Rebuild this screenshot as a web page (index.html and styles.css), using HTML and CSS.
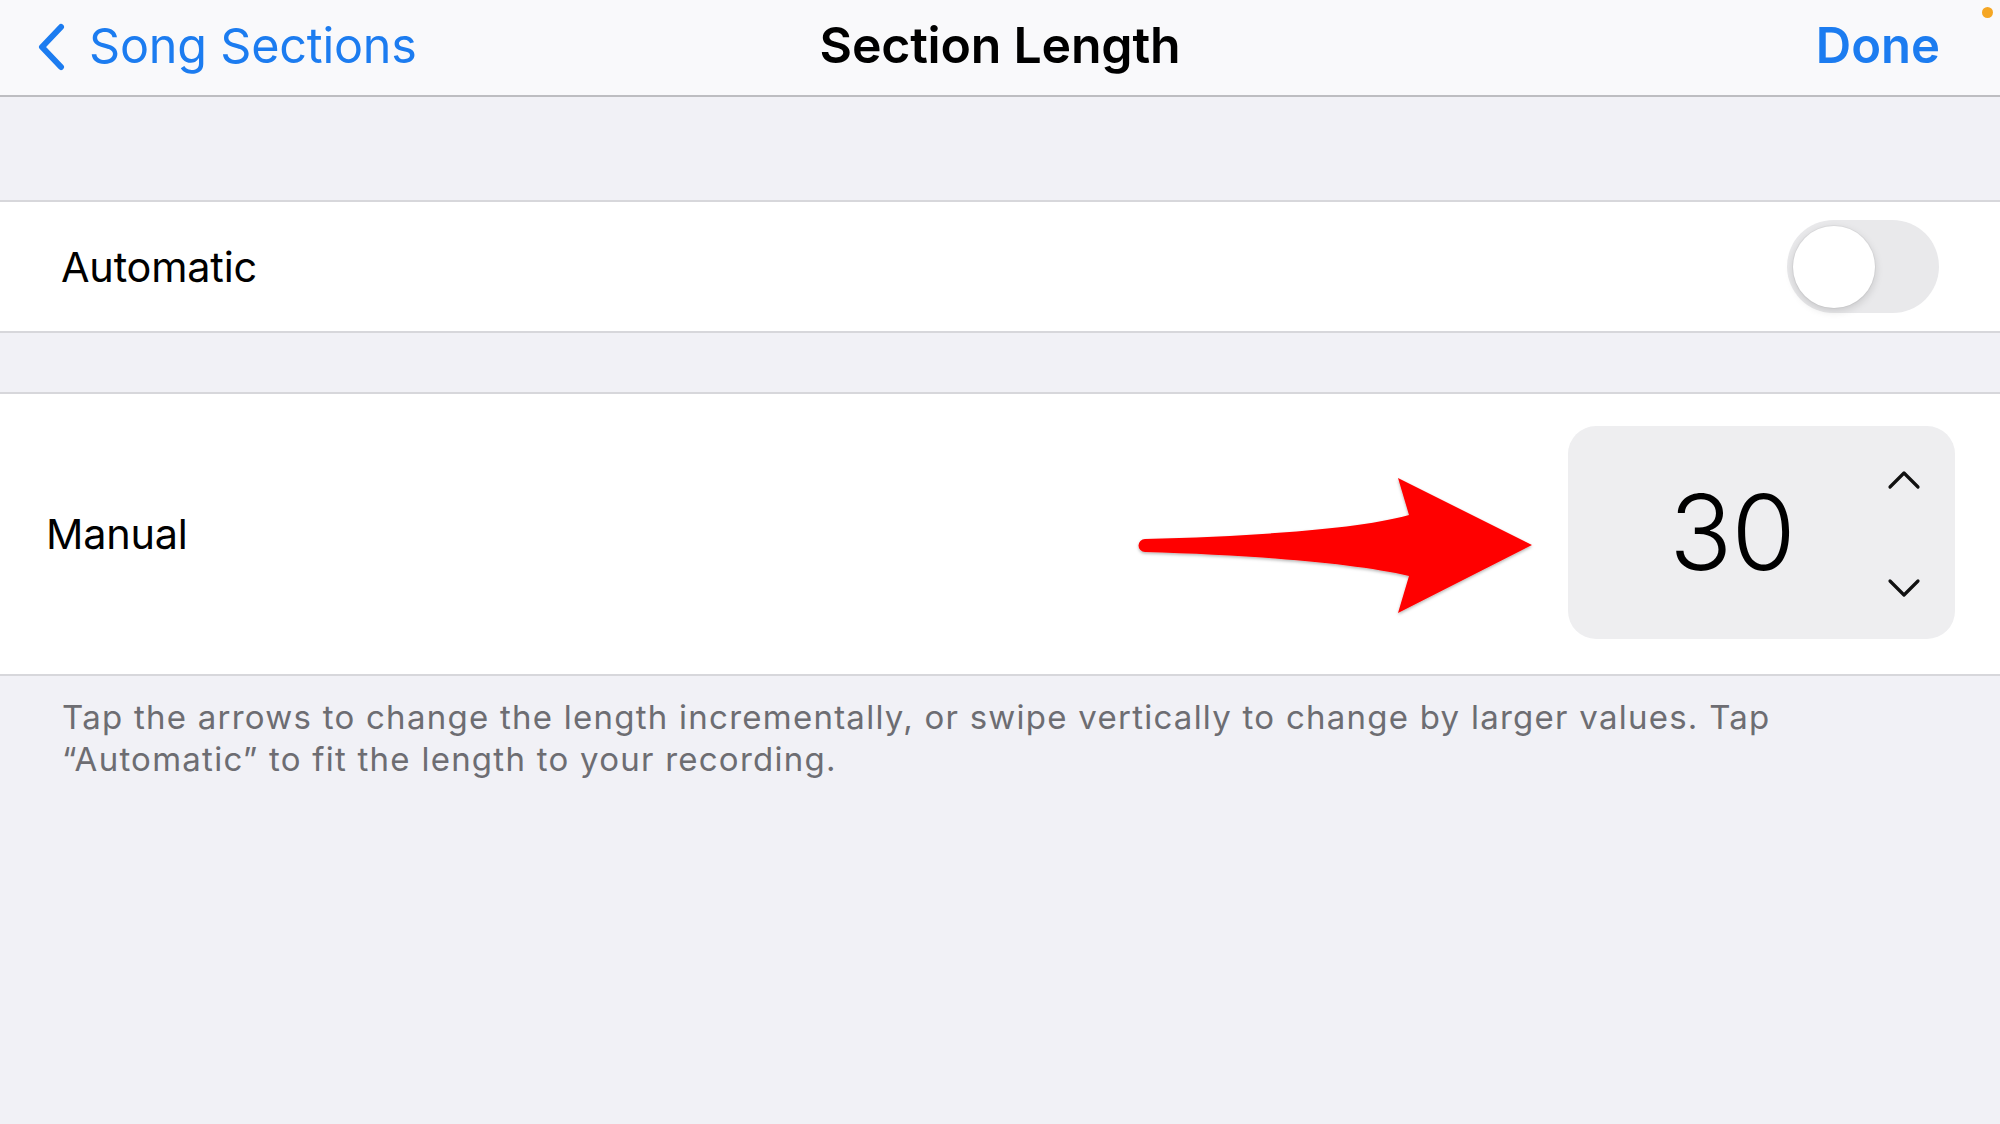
FILE: index.html
```html
<!DOCTYPE html>
<html>
<head>
    <title>Section Length</title>
    <link rel="stylesheet" href="styles.css">
</head>
<body>
    <header class="navbar">
        <a class="back" href="#">
            <svg class="back-icon" width="30" height="48" viewBox="0 0 30 48">
                <polyline points="24,4 5,24 24,44" fill="none" stroke="#1c7cf0" stroke-width="6" stroke-linecap="round" stroke-linejoin="round"/>
            </svg>
            <span>Song Sections</span>
        </a>
        <h1 class="title">Section Length</h1>
        <a class="done" href="#">Done</a>
        <span class="dot"></span>
    </header>

    <div class="gap top-gap"></div>

    <div class="group">
        <div class="row auto-row">
            <span class="label">Automatic</span>
            <span class="switch"><span class="knob"></span></span>
        </div>
    </div>

    <div class="gap mid-gap"></div>

    <div class="group">
        <div class="row manual-row">
            <span class="label manual-label">Manual</span>

            <!-- annotation arrow laid over the row -->
            <svg class="pointer" width="410" height="150" viewBox="1130 472 410 150">
                <defs>
                    <filter id="soft" x="-5%" y="-10%" width="110%" height="130%">
                        <feDropShadow dx="0" dy="1.5" stdDeviation="1.5" flood-color="#000" flood-opacity="0.3"/>
                    </filter>
                </defs>
                <path filter="url(#soft)" fill="#ff0000"
                      d="M1145 539 C1250 536 1355 530 1409 515 L1398 478 L1532 545 L1398 613 L1409 576 C1355 563 1250 555 1145 552 A6.5 6.5 0 0 1 1145 539 Z"/>
            </svg>

            <div class="stepper">
                <span class="value">30</span>
                <div class="arrows">
                    <svg width="34" height="20" viewBox="0 0 34 20">
                        <polyline points="3,17 17,3 31,17" fill="none" stroke="#111" stroke-width="3.2" stroke-linecap="round" stroke-linejoin="round"/>
                    </svg>
                    <svg width="34" height="20" viewBox="0 0 34 20">
                        <polyline points="3,3 17,17 31,3" fill="none" stroke="#111" stroke-width="3.2" stroke-linecap="round" stroke-linejoin="round"/>
                    </svg>
                </div>
            </div>
        </div>
    </div>

    <p class="footnote">Tap the arrows to change the length incrementally, or swipe vertically to change by larger values. Tap<br>“Automatic” to fit the length to your recording.</p>
</body>
</html>
```

FILE: styles.css
```css
  body {
      margin: 0;
      width: 2000px;
      height: 1124px;
      overflow: hidden;
      font-family: Inter, "Liberation Sans", sans-serif;
      background-color: #f1f1f6;
      color: #000;
  }

  .navbar {
      position: relative;
      height: 95px;
      display: grid;
      grid-template-columns: 1fr auto 1fr;
      align-items: center;
      background-color: #f9f9fb;
      border-bottom: 2px solid #bdbdc1;
  }

  .navbar > a,
  .navbar > h1 {
      margin-top: -5px;
  }

  .back {
      display: flex;
      align-items: center;
      gap: 22px;
      padding-left: 37px;
      color: #1c7cf0;
      text-decoration: none;
      font-size: 48.5px;
      letter-spacing: -0.2px;
  }

  .back-icon {
      margin-top: 3px;
  }

  .title {
      margin: 0;
      font-size: 50px;
      font-weight: 600;
      letter-spacing: -0.2px;
  }

  .done {
      justify-self: end;
      padding-right: 60px;
      color: #1c7cf0;
      text-decoration: none;
      font-size: 49px;
      font-weight: 600;
  }

  .dot {
      position: absolute;
      top: 7px;
      right: 7px;
      width: 11px;
      height: 11px;
      border-radius: 50%;
      background-color: #f5a623;
  }

  .top-gap {
      height: 103px;
  }

  .mid-gap {
      height: 59px;
  }

  .group {
      background-color: #fff;
      border-top: 2px solid #d7d7db;
      border-bottom: 2px solid #d7d7db;
  }

  .row {
      display: flex;
      align-items: center;
      justify-content: space-between;
  }

  .auto-row {
      height: 129px;
      padding: 0 61px 0 61px;
  }

  .manual-row {
      position: relative;
      height: 280px;
      padding: 0 45px 0 46px;
  }

  .label {
      font-size: 41.4px;
      letter-spacing: -0.2px;
  }

  .switch {
      display: flex;
      align-items: center;
      width: 152px;
      height: 93px;
      padding-left: 6px;
      box-sizing: border-box;
      border-radius: 47px;
      background-color: #e9e9eb;
  }

  .knob {
      width: 82px;
      height: 82px;
      border-radius: 50%;
      background-color: #fff;
      box-shadow: 0 3px 8px rgba(0, 0, 0, 0.15), 0 0 0 1px rgba(0, 0, 0, 0.04);
  }

  .pointer {
      position: absolute;
      left: 1130px;
      top: 78px;
  }

  .stepper {
      display: grid;
      grid-template-columns: 1fr 60px;
      align-items: center;
      width: 387px;
      height: 213px;
      padding: 0 21px 0 22px;
      box-sizing: border-box;
      border-radius: 28px;
      background-color: #eeeef0;
      margin-top: -4px;
  }

  .value {
      text-align: center;
      font-size: 104px;
      font-weight: 300;
      letter-spacing: -1px;
  }

  .arrows {
      display: flex;
      flex-direction: column;
      align-items: center;
      gap: 88px;
      padding-top: 4px;
  }

  .arrows svg {
      display: block;
  }

  .footnote {
      margin: 20px 0 0 0;
      padding-left: 62px;
      font-size: 33px;
      line-height: 42px;
      color: #6d6d72;
      letter-spacing: 1.25px;
  }
```
